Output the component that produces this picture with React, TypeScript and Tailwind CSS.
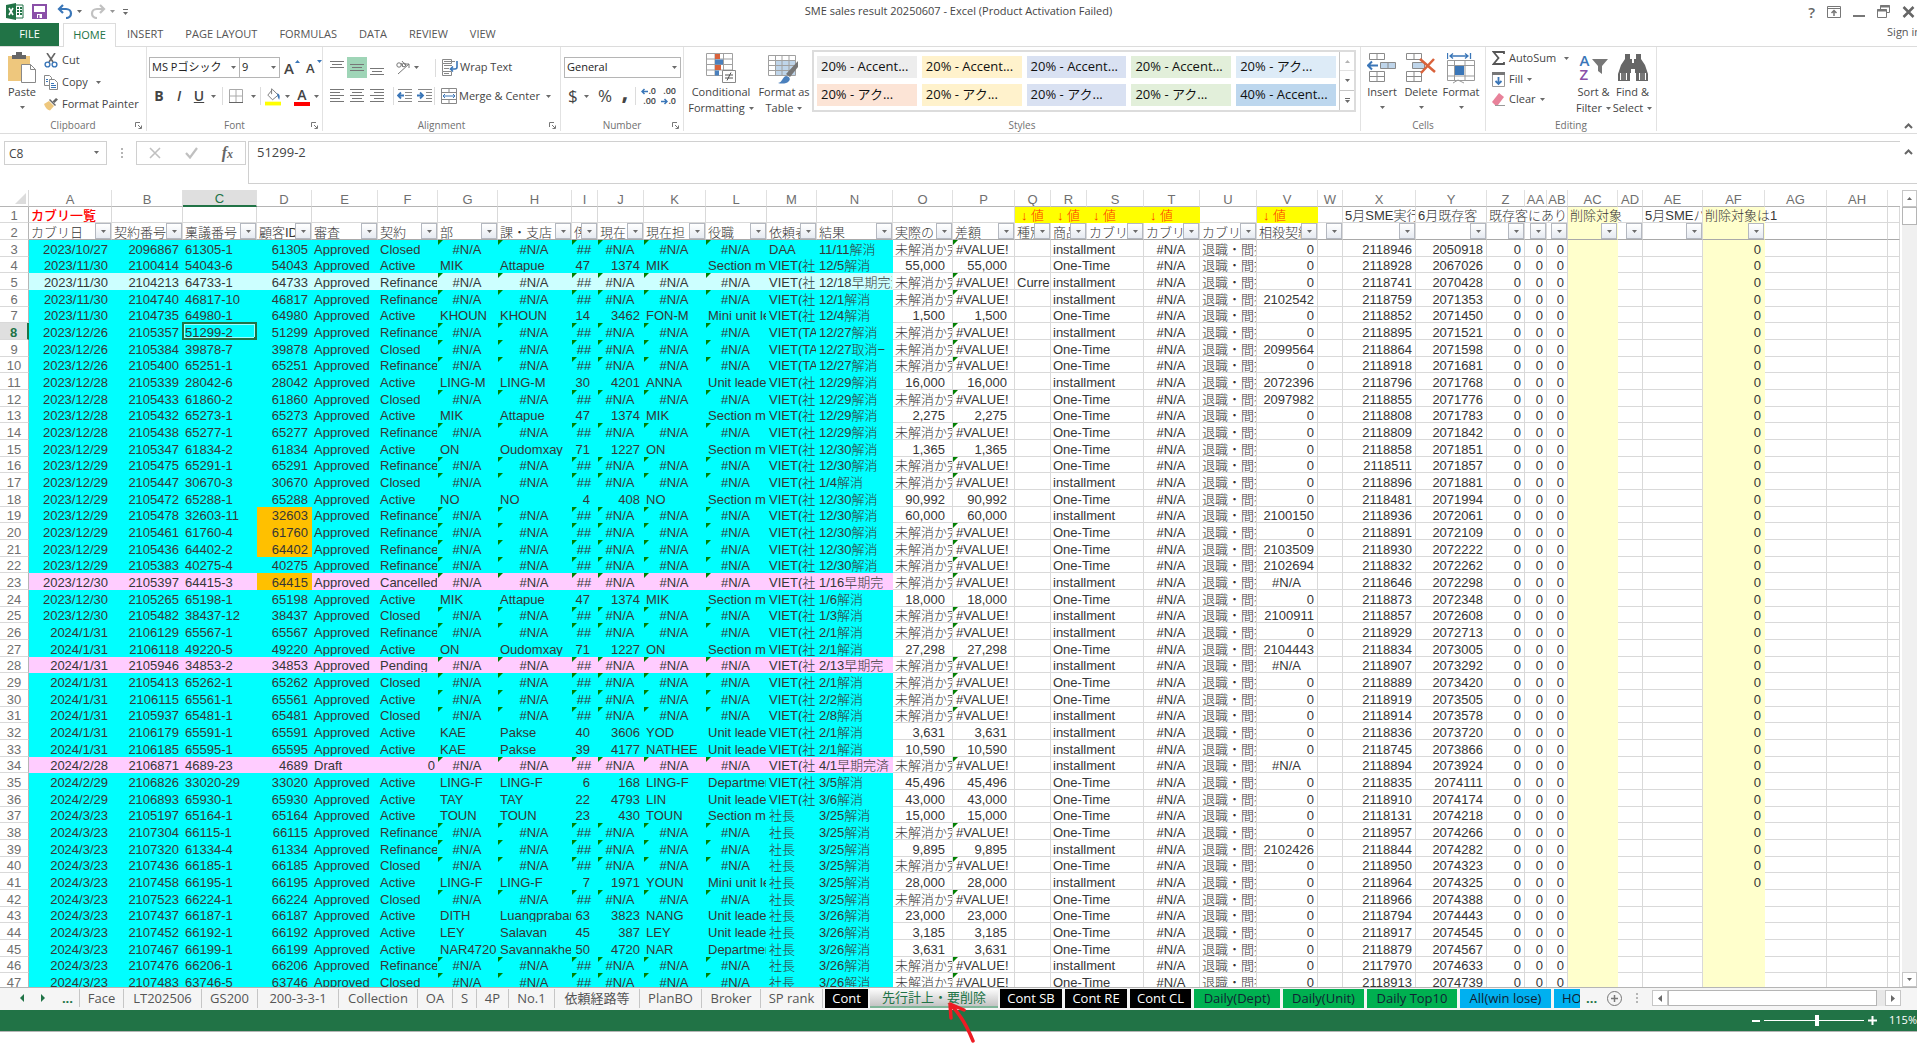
import type { ReactNode } from "react";

const NA = "#N/A";

// A..AH, the last column of the table takes whatever is left
const columns = [
    { id: "A", width: "w-[83px]", label: "カブリ日" },
    { id: "B", width: "w-[71px]", label: "契約番号" },
    { id: "C", width: "w-[74px]", label: "稟議番号" },
    { id: "D", width: "w-[55px]", label: "顧客ID" },
    { id: "E", width: "w-[66px]", label: "審査" },
    { id: "F", width: "w-[60px]", label: "契約" },
    { id: "G", width: "w-[60px]", label: "部" },
    { id: "H", width: "w-[74px]", label: "課・支店" },
    { id: "I", width: "w-[26px]", label: "係" },
    { id: "J", width: "w-[46px]", label: "現在" },
    { id: "K", width: "w-[62px]", label: "現在担" },
    { id: "L", width: "w-[61px]", label: "役職" },
    { id: "M", width: "w-[50px]", label: "依頼者" },
    { id: "N", width: "w-[76px]", label: "結果" },
    { id: "O", width: "w-[60px]", label: "実際の" },
    { id: "P", width: "w-[62px]", label: "差額" },
    { id: "Q", width: "w-[36px]", label: "種別" },
    { id: "R", width: "w-[36px]", label: "商品" },
    { id: "S", width: "w-[57px]", label: "カブリ日" },
    { id: "T", width: "w-[56px]", label: "カブリ日" },
    { id: "U", width: "w-[57px]", label: "カブリ日" },
    { id: "V", width: "w-[61px]", label: "相殺契約" },
    { id: "W", width: "w-[25px]", label: "" },
    { id: "X", width: "w-[73px]", label: "" },
    { id: "Y", width: "w-[71px]", label: "" },
    { id: "Z", width: "w-[38px]", label: "" },
    { id: "AA", width: "w-[22px]", label: "" },
    { id: "AB", width: "w-[21px]", label: "" },
    { id: "AC", width: "w-[50px]", label: "" },
    { id: "AD", width: "w-[25px]", label: "" },
    { id: "AE", width: "w-[60px]", label: "" },
    { id: "AF", width: "w-[62px]", label: "" },
    { id: "AG", width: "w-[62px]", label: "" },
    { id: "AH", width: "w-[61px]", label: "" },
];

// date | contract | approval no. | status | team (6 fields, comma separated) | requester | result | amount | type | offset | X | Y
const data = `2023/10/27|2096867|61305-1|Closed||DAA|11/11解消||i|0|2118946|2050918
2023/11/30|2100414|54043-6|Active|MIK,Attapue,47,1374,MIK,Section manager|VIET(社|12/5解消|55,000|o|0|2118928|2067026
2023/11/30|2104213|64733-1|Refinance||VIET(社|12/18早期完済||i|0|2118741|2070428
2023/11/30|2104740|46817-10|Refinance||VIET(社|12/1解消||i|2102542|2118759|2071353
2023/11/30|2104735|64980-1|Active|KHOUN,KHOUN,14,3462,FON-M,Mini unit leader|VIET(社|12/4解消|1,500|o|0|2118852|2071450
2023/12/26|2105357|51299-2|Refinance||VIET(TA|12/27解消||i|0|2118895|2071521
2023/12/26|2105384|39878-7|Closed||VIET(TA|12/27取消−||o|2099564|2118864|2071598
2023/12/26|2105400|65251-1|Refinance||VIET(TA|12/27解消||o|0|2118918|2071681
2023/12/28|2105339|28042-6|Active|LING-M,LING-M,30,4201,ANNA,Unit leade|VIET(社|12/29解消|16,000|i|2072396|2118796|2071768
2023/12/28|2105433|61860-2|Closed||VIET(社|12/29解消||o|2097982|2118855|2071776
2023/12/28|2105432|65273-1|Active|MIK,Attapue,47,1374,MIK,Section manager|VIET(社|12/29解消|2,275|o|0|2118808|2071783
2023/12/28|2105438|65277-1|Refinance||VIET(社|12/29解消||o|0|2118809|2071842
2023/12/29|2105347|61834-2|Active|ON,Oudomxay,71,1227,ON,Section manager|VIET(社|12/30解消|1,365|o|0|2118858|2071851
2023/12/29|2105475|65291-1|Refinance||VIET(社|12/30解消||o|0|2118511|2071857
2023/12/29|2105447|30670-3|Closed||VIET(社|1/4解消||i|0|2118896|2071881
2023/12/29|2105472|65288-1|Active|NO,NO,4,408,NO,Section manager|VIET(社|12/30解消|90,992|o|0|2118481|2071994
2023/12/29|2105478|32603-11|Refinance||VIET(社|12/30解消|60,000|i|2100150|2118936|2072061
2023/12/29|2105461|61760-4|Refinance||VIET(社|12/30解消||o|0|2118891|2072109
2023/12/29|2105436|64402-2|Refinance||VIET(社|12/30解消||o|2103509|2118930|2072222
2023/12/29|2105383|40275-4|Refinance||VIET(社|12/30解消||o|2102694|2118832|2072262
2023/12/30|2105397|64415-3|Cancelled||VIET(社|1/16早期完||i|#N/A|2118646|2072298
2023/12/30|2105265|65198-1|Active|MIK,Attapue,47,1374,MIK,Section manager|VIET(社|1/6解消|18,000|o|0|2118873|2072348
2023/12/30|2105482|38437-12|Closed||VIET(社|1/3解消||i|2100911|2118857|2072608
2024/1/31|2106129|65567-1|Refinance||VIET(社|2/1解消||i|0|2118929|2072713
2024/1/31|2106118|49220-5|Active|ON,Oudomxay,71,1227,ON,Section manager|VIET(社|2/1解消|27,298|o|2104443|2118834|2073005
2024/1/31|2105946|34853-2|Pending||VIET(社|2/13早期完||i|#N/A|2118907|2073292
2024/1/31|2105413|65262-1|Closed||VIET(社|2/1解消||o|0|2118889|2073420
2024/1/31|2106115|65561-1|Active||VIET(社|2/2解消||o|0|2118919|2073505
2024/1/31|2105937|65481-1|Closed||VIET(社|2/8解消||i|0|2118914|2073578
2024/1/31|2106179|65591-1|Active|KAE,Pakse,40,3606,YOD,Unit leade|VIET(社|2/1解消|3,631|i|0|2118836|2073720
2024/1/31|2106185|65595-1|Active|KAE,Pakse,39,4177,NATHEE,Unit leade|VIET(社|2/1解消|10,590|i|0|2118745|2073866
2024/2/28|2106871|4689-23|0||VIET(社|4/1早期完済||i|#N/A|2118894|2073924
2024/2/29|2106826|33020-29|Active|LING-F,LING-F,6,168,LING-F,Department|VIET(社|3/5解消|45,496|o|0|2118835|2074111
2024/2/29|2106893|65930-1|Active|TAY,TAY,22,4793,LIN,Unit leade|VIET(社|3/6解消|43,000|o|0|2118910|2074174
2024/3/23|2105197|65164-1|Active|TOUN,TOUN,23,430,TOUN,Section manager|社長|3/25解消|15,000|o|0|2118131|2074218
2024/3/23|2107304|66115-1|Refinance||社長|3/25解消||o|0|2118957|2074266
2024/3/23|2107320|61334-4|Refinance||社長|3/25解消|9,895|i|2102426|2118844|2074282
2024/3/23|2107436|66185-1|Closed||社長|3/25解消||o|0|2118950|2074323
2024/3/23|2107458|66195-1|Active|LING-F,LING-F,7,1971,YOUN,Mini unit leader|社長|3/25解消|28,000|i|0|2118964|2074325
2024/3/23|2107523|66224-1|Closed||社長|3/25解消||o|0|2118966|2074388
2024/3/23|2107437|66187-1|Active|DITH,Luangprabang,63,3823,NANG,Unit leade|社長|3/26解消|23,000|o|0|2118794|2074443
2024/3/23|2107452|66192-1|Active|LEY,Salavan,45,387,LEY,Unit leade|社長|3/26解消|3,185|o|0|2118917|2074545
2024/3/23|2107467|66199-1|Active|NAR4720,Savannakhet,50,4720,NAR,Department|社長|3/26解消|3,631|o|0|2118879|2074567
2024/3/23|2107476|66206-1|Refinance||社長|3/26解消||i|0|2117970|2074633
2024/3/23|2107483|63746-5|Closed||社長|3/26解消||o|0|2118913|2074739`
    .split("\n")
    .map((line) => line.split("|"));

const rowHeight = (n: number) => (n % 3 === 1 ? "h-4" : "h-[17px]");

function Caret({ className = "" }: { className?: string }) {
    return (
        <svg className={`shrink-0 ${className}`} width="5" height="3" viewBox="0 0 5 3">
            <path d="M0 0h5L2.5 3z" fill="#6a6a6a" />
        </svg>
    );
}

/* ---------- Sheet ---------- */

type CellProps = {
    children?: ReactNode;
    align?: "left" | "right" | "center";
    bg?: string;
    flag?: boolean;
    pad?: string;
    span?: number;
    spill?: boolean;
    selected?: boolean;
};

function Cell({ children, align = "left", bg, flag, pad = "pl-0.5 pr-[3px]", span, spill, selected }: CellProps) {
    const alignment = { left: "text-left", right: "text-right", center: "text-center" }[align];
    return (
        <td
            colSpan={span}
            className={`relative border-r border-b align-bottom ${alignment} ${pad} ${bg ? `${bg} border-transparent` : "border-[#d9d9d9]"} ${spill || selected ? "" : "overflow-hidden"}`}
        >
            {flag && (
                <span className="absolute top-0 left-0 border-t-[5px] border-r-[5px] border-t-[#008000] border-r-transparent" />
            )}
            {children}
            {selected && (
                <span className="absolute -inset-px border-2 border-[#217346] ring-1 ring-inset ring-white/60">
                    <span className="absolute -right-[3px] -bottom-[3px] h-1 w-1 bg-[#217346]" />
                </span>
            )}
        </td>
    );
}

function RowHead({ n }: { n: number }) {
    return (
        <th
            scope="row"
            className={`border-b align-bottom ${n === 8 ? "border-r-2 border-r-[#217346] border-b-[#d9d9d9] bg-[#dfdfdf] font-bold text-[#217346]" : "border-r border-r-[#b5b5b5] border-b-[#d9d9d9] font-normal text-[#6f6f6f]"}`}
        >
            {n}
        </th>
    );
}

function TitleRow() {
    const hot = "bg-[#ffff00]";
    const arrow = <span className="text-[#ff3300]">↓ 値</span>;
    return (
        <tr className="h-4">
            <RowHead n={1} />
            <Cell spill>
                <span className="font-medium text-[#ff0000]">カブリ一覧</span>
            </Cell>
            {columns.slice(1, 16).map((c) => (
                <Cell key={c.id} />
            ))}
            <Cell bg={hot} pad="pl-1.5">{arrow}</Cell>
            <Cell bg={hot} pad="pl-1.5">{arrow}</Cell>
            <Cell bg={hot} pad="pl-1.5">{arrow}</Cell>
            <Cell bg={hot} pad="pl-1.5">{arrow}</Cell>
            <Cell />
            <Cell bg={hot} pad="pl-1.5">{arrow}</Cell>
            <Cell />
            <Cell>5月SME実行</Cell>
            <Cell>6月既存客</Cell>
            <Cell span={3}>既存客にあり</Cell>
            <Cell bg="bg-[#ffffcc]" spill>削除対象</Cell>
            <Cell />
            <Cell>5月SMEパ</Cell>
            <Cell bg="bg-[#ffffcc]" spill>削除対象は1</Cell>
            <Cell />
            <Cell />
            <Cell />
        </tr>
    );
}

function FilterRow() {
    return (
        <tr className="h-[17px]">
            <RowHead n={2} />
            {columns.map((c) => (
                <td
                    key={c.id}
                    className={`relative overflow-hidden border-r border-b border-b-[#a9a9a9] pl-0.5 align-bottom ${c.id === "AC" || c.id === "AF" ? "border-r-[#ffffcc] bg-[#ffffcc]" : "border-r-[#d9d9d9]"}`}
                >
                    {c.label}
                    {c.id !== "AG" && c.id !== "AH" && (
                        <button
                            aria-label={`Filter ${c.id}`}
                            className="absolute top-0 right-0 flex h-4 w-4 items-center justify-center border border-[#b4b8c0] bg-linear-to-b from-white to-[#e6eaf1]"
                        >
                            <Caret />
                        </button>
                    )}
                </td>
            ))}
            <td className="border-r border-b border-r-[#d9d9d9] border-b-[#a9a9a9]" />
        </tr>
    );
}

function DataRow({ row, n }: { row: string[]; n: number }) {
    const [date, contract, approval, status, team, requester, result, amount, type, offset, x, y] = row;
    const people = team ? team.split(",") : null;
    const bg = n === 5 ? "bg-[#ccffff]" : [23, 28, 34].includes(n) ? "bg-[#ffccff]" : "bg-[#00ffff]";
    const idBg = [19, 20, 21, 23].includes(n) ? "bg-[#ffc000]" : bg;
    const aligns = ["left", "left", "right", "right", "left", "left"] as const;

    return (
        <tr className={rowHeight(n)}>
            <RowHead n={n} />
            <Cell bg={bg} align="right">{date}</Cell>
            <Cell bg={bg} align="right">{contract}</Cell>
            <Cell bg={bg} selected={n === 8}>{approval}</Cell>
            <Cell bg={idBg} align="right">{approval.split("-")[0]}</Cell>
            <Cell bg={bg}>{n === 34 ? "Draft" : "Approved"}</Cell>
            <Cell bg={bg} align={status === "0" ? "right" : "left"} pad="pl-0.5 pr-0.5">{status}</Cell>
            {aligns.map((align, i) =>
                people ? (
                    <Cell key={i} bg={bg} align={align} pad={i === 2 ? "pr-[7px]" : undefined}>{people[i]}</Cell>
                ) : (
                    <Cell key={i} bg={bg} align="center" flag>{i === 2 ? "##" : NA}</Cell>
                ),
            )}
            <Cell bg={bg}>{requester}</Cell>
            <Cell bg={bg}>{result}</Cell>
            <Cell align={amount ? "right" : "left"} pad="pl-0.5 pr-[7px]">{amount || "未解消か完"}</Cell>
            <Cell align={amount ? "right" : "left"} pad={amount ? "pr-[7px]" : "pl-[3px]"} flag={!amount}>
                {amount || "#VALUE!"}
            </Cell>
            <Cell>{n === 5 ? "Curre" : ""}</Cell>
            <Cell span={2}>{type === "i" ? "installment" : "One-Time"}</Cell>
            <Cell align="center">{NA}</Cell>
            <Cell>退職・間接</Cell>
            <Cell align={offset === NA ? "center" : "right"}>{offset}</Cell>
            <Cell />
            <Cell align="right">{x}</Cell>
            <Cell align="right">{y}</Cell>
            <Cell align="right">0</Cell>
            <Cell align="right">0</Cell>
            <Cell align="right">0</Cell>
            <Cell bg="bg-[#ffffcc]" />
            <Cell />
            <Cell />
            <Cell bg="bg-[#ffffcc]" align="right">{n <= 41 ? "0" : ""}</Cell>
            <Cell />
            <Cell />
            <Cell />
        </tr>
    );
}

function Sheet() {
    return (
        <main className="flex min-h-0 flex-1 overflow-hidden font-['Liberation_Sans','Noto_Sans_CJK_JP',sans-serif]">
            <div className="min-w-0 flex-1 overflow-hidden">
                <table className="w-full table-fixed border-separate border-spacing-0 text-[13px] leading-[13px] font-light whitespace-nowrap text-[#363636]">
                    <colgroup>
                        <col className="w-[29px]" />
                        {columns.map((c) => (
                            <col key={c.id} className={c.width} />
                        ))}
                        <col />
                    </colgroup>
                    <thead>
                        <tr className="h-[17px]">
                            <th className="relative border-r border-b border-r-[#d9d9d9] border-b-[#b5b5b5]">
                                <span className="absolute right-0.5 bottom-0.5 border-b-[11px] border-l-[11px] border-b-[#dcdcdc] border-l-transparent" />
                            </th>
                            {columns.map((c) => (
                                <th
                                    key={c.id}
                                    className={`overflow-hidden border-r border-r-[#e0e0e0] align-bottom font-normal ${c.id === "C" ? "border-b-2 border-b-[#217346] bg-[#dfdfdf] text-[#217346]" : "border-b border-b-[#b5b5b5] text-[#6f6f6f]"}`}
                                >
                                    {c.id}
                                </th>
                            ))}
                            <th className="border-b border-b-[#b5b5b5]" />
                        </tr>
                    </thead>
                    <tbody>
                        <TitleRow />
                        <FilterRow />
                        {data.map((row, i) => (
                            <DataRow key={row[1]} row={row} n={i + 3} />
                        ))}
                    </tbody>
                </table>
            </div>
            <div className="ml-0.5 flex w-[15px] flex-col bg-[#f0f0f0]">
                <button aria-label="Scroll up" className="flex h-[17px] items-center justify-center border border-[#c6c6c6] bg-white">
                    <Caret className="rotate-180" />
                </button>
                <div className="h-[18px] border border-[#b5b5b5] bg-white" />
                <button aria-label="Scroll down" className="mt-auto flex h-[15px] items-center justify-center border border-[#c6c6c6] bg-white">
                    <Caret />
                </button>
            </div>
        </main>
    );
}

/* ---------- Title bar and ribbon ---------- */

function TitleBar() {
    return (
        <header className="relative flex h-[23px] shrink-0 items-center px-1.5">
            <div className="flex items-center">
                <svg width="18" height="17" viewBox="0 0 18 17">
                    <path d="M8 2h9v13H8z" fill="#fff" stroke="#217346" />
                    <path d="M11 5h2M14 5h2M11 8h2M14 8h2M11 11h2M14 11h2" stroke="#217346" strokeWidth="2" />
                    <path d="M0 2l10-2v17L0 15z" fill="#217346" />
                    <path d="M3 5l4 7M7 5l-4 7" stroke="#fff" strokeWidth="1.6" />
                </svg>
                <button aria-label="Save" className="ml-2">
                    <svg width="15" height="15" viewBox="0 0 15 15" className="block">
                        <path d="M1 1h13v13H1z" fill="#fff" stroke="#8a4fa8" strokeWidth="2" />
                        <path d="M1 8h13v6H1z" fill="#8a4fa8" />
                        <path d="M5 10h5v4H5z" fill="#fff" />
                        <path d="M6 11h1.500v3H6z" fill="#8a4fa8" />
                    </svg>
                </button>
                <button aria-label="Undo" className="ml-2.5 flex items-center gap-1">
                    <svg width="16" height="15" viewBox="0 0 16 15" fill="none" stroke="#3a76b8" strokeWidth="2.200">
                        <path d="M6 1L2 5l4 4M2 5h7c3 0 5 2 5 4.500S12 14 9 14" />
                    </svg>
                    <Caret />
                </button>
                <button aria-label="Redo" className="ml-2 flex items-center gap-1 opacity-70">
                    <svg width="16" height="15" viewBox="0 0 16 15" fill="none" stroke="#a8a8a8" strokeWidth="2.200">
                        <path d="M10 1l4 4-4 4M14 5H7C4 5 2 7 2 9.500S4 14 7 14" />
                    </svg>
                    <Caret />
                </button>
                <button aria-label="Customize toolbar" className="ml-2 flex flex-col items-center gap-0.5">
                    <span className="h-px w-[5px] bg-[#6a6a6a]" />
                    <Caret />
                </button>
            </div>
            <h1 className="absolute inset-x-0 text-center text-[11px] text-[#444]">
                SME sales result 20250607 - Excel (Product Activation Failed)
            </h1>
            <div className="relative ml-auto -mr-1 flex items-center gap-3 text-[#666]">
                <button className="text-[15px] leading-4 font-semibold">?</button>
                <button aria-label="Ribbon display options">
                    <svg width="14" height="12" viewBox="0 0 14 12" fill="none" stroke="#777">
                        <path d="M.5.5h13v11H.5zM.5 2.500h13" />
                        <path d="M7 10V5M4.500 7L7 4.500 9.500 7" strokeWidth="1.500" />
                    </svg>
                </button>
                <button aria-label="Minimize">
                    <svg width="12" height="12"><path d="M0 9h12v2H0z" fill="#777" /></svg>
                </button>
                <button aria-label="Restore">
                    <svg width="13" height="13" viewBox="0 0 13 13" fill="#fff" stroke="#777">
                        <path d="M3.500.5h9v7h-9z" />
                        <path d="M3 1.500h10" strokeWidth="2" />
                        <path d="M.5 4.500h9v8h-9z" />
                        <path d="M0 5.500h10" strokeWidth="2" />
                    </svg>
                </button>
                <button aria-label="Close">
                    <svg width="13" height="12" viewBox="0 0 13 12"><path d="M1.500 1l10 10M11.500 1l-10 10" stroke="#666" strokeWidth="2.500" /></svg>
                </button>
            </div>
        </header>
    );
}

function RibbonTabs() {
    return (
        <nav className="flex h-6 shrink-0 items-stretch border-b border-[#dcdcdc] text-[11px] text-[#555]">
            <button className="w-[59px] bg-[#217346] text-white">FILE</button>
            <button className="-mb-px ml-1 w-[53px] border border-b-0 border-[#dcdcdc] bg-white text-[#217346]">HOME</button>
            {["INSERT", "PAGE LAYOUT", "FORMULAS", "DATA", "REVIEW", "VIEW"].map((t) => (
                <button key={t} className="px-[11px]">{t}</button>
            ))}
            <a href="#signin" className="-mr-1 ml-auto self-center pb-1 whitespace-nowrap">Sign in</a>
        </nav>
    );
}

function Group({ name, width, launcher, children }: { name: string; width: string; launcher?: boolean; children: ReactNode }) {
    return (
        <section className={`relative flex shrink-0 flex-col border-r border-[#e2e2e2] ${width}`}>
            <div className="flex flex-1 items-start">{children}</div>
            <div className="h-3 text-center text-[10px] leading-3 text-[#707070]">{name}</div>
            {launcher && (
                <button aria-label={`${name} settings`} className="absolute right-1 bottom-0.5">
                    <svg width="7" height="7" viewBox="0 0 7 7" fill="none" stroke="#777" className="block">
                        <path d="M.5 5V.5H5M3 3l3 3M6.500 3.500v3h-3" />
                    </svg>
                </button>
            )}
        </section>
    );
}

function Divider() {
    return <span className="h-[18px] w-px shrink-0 bg-[#dcdcdc]" />;
}

function Lines({ rows }: { rows: number[][] }) {
    return (
        <svg width="14" height="16" viewBox="0 0 14 16">
            {rows.map(([x, y, w]) => (
                <path key={y} d={`M${x} ${y}.5h${w}`} stroke="#777" />
            ))}
        </svg>
    );
}

function BigButton({ icon, lines, width, caretBelow }: { icon: ReactNode; lines: string[]; width: string; caretBelow?: boolean }) {
    return (
        <button className={`flex flex-col items-center pt-[5px] ${width}`}>
            <span className="flex h-8 items-center">{icon}</span>
            {lines.map((line, i) => (
                <span key={line} className="flex items-center gap-1 leading-4 whitespace-nowrap">
                    {line}
                    {!caretBelow && i === lines.length - 1 && <Caret />}
                </span>
            ))}
            {caretBelow && <Caret className="mt-1.5" />}
        </button>
    );
}

function Clipboard() {
    return (
        <Group name="Clipboard" width="w-[147px]" launcher>
            <BigButton
                width="w-11"
                lines={["Paste"]}
                caretBelow
                icon={
                    <svg width="30" height="32" viewBox="0 0 30 32">
                        <path d="M1 4h22v25H1z" fill="#eec77d" />
                        <path d="M5 3h4V0h6v3h4v4H5z" fill="#666" />
                        <path d="M14.500 12.500h9l5 5v13h-14z" fill="#fff" stroke="#888" />
                        <path d="M23.500 12.500v5h5" fill="none" stroke="#888" />
                    </svg>
                }
            />
            <div className="flex flex-col pt-0.5 whitespace-nowrap">
                <button className="flex h-[22px] items-center gap-1">
                    <svg width="14" height="15" viewBox="0 0 14 15" fill="none">
                        <path d="M3 0l6 9M11 0L5 9" stroke="#666" strokeWidth="1.600" />
                        <circle cx="3.500" cy="11.500" r="2.400" stroke="#3a76b8" strokeWidth="1.400" />
                        <circle cx="10.500" cy="11.500" r="2.400" stroke="#3a76b8" strokeWidth="1.400" />
                    </svg>
                    Cut
                </button>
                <button className="flex h-[22px] items-center gap-1">
                    <svg width="14" height="15" viewBox="0 0 14 15" fill="#fff" stroke="#888">
                        <path d="M.5.500h5l2 2v8h-7z" />
                        <path d="M5.500 4.500h5l3 3v7h-8z" />
                        <path d="M7 8.500h3M7 10.500h5M7 12.500h5M2 4.500h2M2 6.500h2" stroke="#3a76b8" />
                    </svg>
                    Copy <Caret className="ml-1" />
                </button>
                <button className="flex h-[22px] items-center gap-1">
                    <svg width="14" height="14" viewBox="0 0 14 14">
                        <path d="M0 7l5-3 5 5-4 4.500C3 13 1 10 0 7z" fill="#eec77d" />
                        <path d="M5 3l6 6 1-1-6-6z" fill="#666" />
                        <path d="M8.500 4.500L12 1l2 1.500-3.500 3.500z" fill="#666" />
                    </svg>
                    Format Painter
                </button>
            </div>
        </Group>
    );
}

function Dropdown({ label, value, width }: { label: string; value: string; width: string }) {
    return (
        <label className={`relative block h-[21px] ${width}`}>
            <span className="sr-only">{label}</span>
            <select className="h-full w-full appearance-none border border-[#b5b5b5] bg-white pl-0.5 text-[11px] text-[#222]">
                <option>{value}</option>
            </select>
            <Caret className="absolute top-[9px] right-1" />
        </label>
    );
}

function FontGroup() {
    return (
        <Group name="Font" width="w-[176px]" launcher>
            <div className="flex flex-col gap-2 pt-2.5 pl-0.5">
                <div className="flex items-center">
                    <Dropdown label="Font" value="MS Pゴシック" width="w-[91px]" />
                    <Dropdown label="Font size" value="9" width="-ml-px w-[41px]" />
                    <button aria-label="Grow font" className="relative ml-1 w-4 text-left text-[15px] leading-5 font-semibold">
                        A
                        <svg width="5" height="3" className="absolute top-0.5 right-0"><path d="M0 3h5L2.500 0z" fill="#3a76b8" /></svg>
                    </button>
                    <button aria-label="Shrink font" className="relative ml-1.5 w-4 text-left text-[13px] leading-5 font-semibold">
                        A
                        <svg width="5" height="3" className="absolute top-0.5 right-0"><path d="M0 0h5L2.500 3z" fill="#3a76b8" /></svg>
                    </button>
                </div>
                <div className="flex h-5 items-center text-sm">
                    <button className="w-5 font-bold">B</button>
                    <button className="w-5 font-semibold italic">I</button>
                    <button className="w-5 font-semibold underline">U</button>
                    <Caret className="mx-0.5" />
                    <span className="w-1" />
                    <Divider />
                    <button aria-label="Borders" className="ml-1.5 flex items-center gap-2">
                        <svg width="14" height="15" viewBox="0 0 14 15" fill="none" stroke="#aaa">
                            <path d="M.5.5h13v13H.5zM7 .500v13M.5 7h13" />
                            <path d="M0 13.500h14" stroke="#666" />
                        </svg>
                        <Caret />
                    </button>
                    <span className="w-1" />
                    <Divider />
                    <button aria-label="Fill color" className="ml-1 flex items-center gap-1">
                        <svg width="16" height="19" viewBox="0 0 17 19">
                            <path d="M8 2l6 6-6 5-5-5z" fill="#fff" stroke="#777" />
                            <path d="M7 1v6" stroke="#777" />
                            <path d="M13 6c3 1 3 4 2 7-1-2-2-4-2-7z" fill="#3a76b8" />
                            <path d="M0 15h17v4H0z" fill="#ffff00" />
                        </svg>
                        <Caret />
                    </button>
                    <button aria-label="Font color" className="ml-1 flex items-center gap-1">
                        <span className="w-4 border-b-4 border-[#ff0000] text-center leading-[15px] font-semibold">A</span>
                        <Caret />
                    </button>
                </div>
            </div>
        </Group>
    );
}

function Alignment() {
    return (
        <Group name="Alignment" width="w-[238px]" launcher>
            <div className="flex flex-col gap-2 pt-2.5 pl-1">
                <div className="flex h-[21px] items-center">
                    <button aria-label="Top align" className="flex w-5 justify-center"><Lines rows={[[0, 1, 14], [2, 4, 10], [0, 7, 14]]} /></button>
                    <button aria-label="Middle align" className="flex h-[21px] w-5 items-center justify-center bg-[#9fd5b7]"><Lines rows={[[0, 4, 14], [2, 7, 10], [0, 10, 14]]} /></button>
                    <button aria-label="Bottom align" className="flex w-5 justify-center"><Lines rows={[[0, 8, 14], [2, 11, 10], [0, 14, 14]]} /></button>
                    <button aria-label="Orientation" className="ml-2 flex items-center gap-1">
                        <svg width="15" height="15" viewBox="0 0 15 15" fill="none" stroke="#777">
                            <path d="M3 14L14 4M14 4h-4M14 4v4" />
                            <circle cx="4" cy="5" r="2.200" />
                            <path d="M6 3l2 4M7 1l4 5" />
                            <circle cx="9" cy="5" r="1.800" />
                        </svg>
                        <Caret />
                    </button>
                    <span className="w-4" />
                    <Divider />
                    <button className="ml-1.5 flex items-center gap-0.5 whitespace-nowrap">
                        <svg width="16" height="17" viewBox="0 0 16 17" fill="none" stroke="#888">
                            <path d="M.5.5h9v4h-9zM.5 4.500v8h9M.5 12.500v4h9v-4M2 2.500h11M2 6.500h8M2 9.500h5M2 14.500h5" />
                            <path d="M15 2v6c0 1-1 2-2 2H9M11 7.500L8.500 10l2.500 2.500" stroke="#3a76b8" strokeWidth="1.600" />
                        </svg>
                        Wrap Text
                    </button>
                </div>
                <div className="flex h-5 items-center">
                    <button aria-label="Align left" className="flex w-5 justify-center"><Lines rows={[[0, 1, 14], [0, 4, 10], [0, 7, 14], [0, 10, 10], [0, 13, 14]]} /></button>
                    <button aria-label="Center" className="flex w-5 justify-center"><Lines rows={[[0, 1, 14], [2, 4, 10], [0, 7, 14], [2, 10, 10], [0, 13, 14]]} /></button>
                    <button aria-label="Align right" className="flex w-5 justify-center"><Lines rows={[[0, 1, 14], [4, 4, 10], [0, 7, 14], [4, 10, 10], [0, 13, 14]]} /></button>
                    <span className="w-1.5" />
                    <Divider />
                    <button aria-label="Decrease indent" className="flex w-5 justify-center">
                        <svg width="15" height="16" viewBox="0 0 15 16" fill="none" stroke="#888">
                            <path d="M1 1.500h14M8 4.500h7M8 7.500h7M8 10.500h7M1 13.500h14" />
                            <path d="M7 7.500H1M4 4.500l-3 3 3 3" stroke="#3a76b8" strokeWidth="1.800" />
                        </svg>
                    </button>
                    <button aria-label="Increase indent" className="flex w-5 justify-center">
                        <svg width="15" height="16" viewBox="0 0 15 16" fill="none" stroke="#888">
                            <path d="M1 1.500h14M9 4.500h6M9 7.500h6M9 10.500h6M1 13.500h14" />
                            <path d="M0 7.500h6M3 4.500l3 3-3 3" stroke="#3a76b8" strokeWidth="1.800" />
                        </svg>
                    </button>
                    <Divider />
                    <button className="ml-1.5 flex items-center gap-0.5 whitespace-nowrap">
                        <svg width="16" height="17" viewBox="0 0 16 17" fill="none" stroke="#888">
                            <path d="M.5.5h15v15H.5zM.5 4.500h15M.5 11.500h15M8 .5v4M8 11.500v4" />
                            <path d="M2 8h12M4 6L2 8l2 2M12 6l2 2-2 2" stroke="#3a76b8" />
                        </svg>
                        Merge &amp; Center <Caret className="ml-1" />
                    </button>
                </div>
            </div>
        </Group>
    );
}

function NumberGroup() {
    return (
        <Group name="Number" width="w-[123px]" launcher>
            <div className="flex flex-col gap-2 pt-2.5 pl-[3px]">
                <Dropdown label="Number format" value="General" width="w-[117px]" />
                <div className="flex h-5 items-center pl-1 text-[17px]">
                    <button className="w-4 text-left">$</button>
                    <Caret className="mr-1.5" />
                    <button className="w-5">%</button>
                    <button className="w-5 self-start text-2xl leading-[10px] font-bold">,</button>
                    <Divider />
                    <button aria-label="Increase decimal" className="ml-1 w-4 text-[9px] leading-[10px] font-semibold">
                        <span className="flex items-center justify-end">
                            <svg width="7" height="7" viewBox="0 0 7 7" fill="none" stroke="#3a76b8" strokeWidth="1.500"><path d="M7 3.500H1M3.500 1L1 3.500 3.500 6" /></svg>
                            .0
                        </span>
                        <span className="block text-right">.00</span>
                    </button>
                    <button aria-label="Decrease decimal" className="ml-1 w-4 text-[9px] leading-[10px] font-semibold">
                        <span className="block text-right">.00</span>
                        <span className="flex items-center justify-end">
                            <svg width="7" height="7" viewBox="0 0 7 7" fill="none" stroke="#3a76b8" strokeWidth="1.500"><path d="M0 3.500h6M3.500 1L6 3.500 3.500 6" /></svg>
                            .0
                        </span>
                    </button>
                </div>
            </div>
        </Group>
    );
}

const styles = [
    { name: "20% - Accent...", bg: "bg-[#ededed]" },
    { name: "20% - Accent...", bg: "bg-[#fff2cc]" },
    { name: "20% - Accent...", bg: "bg-[#d9e1f2]" },
    { name: "20% - Accent...", bg: "bg-[#e2efda]" },
    { name: "20% - アク...", bg: "bg-[#ddebf7]" },
    { name: "20% - アク...", bg: "bg-[#fce4d6]" },
    { name: "20% - アク...", bg: "bg-[#fff2cc]" },
    { name: "20% - アク...", bg: "bg-[#d9e1f2]" },
    { name: "20% - アク...", bg: "bg-[#e2efda]" },
    { name: "40% - Accent...", bg: "bg-[#bdd7ee]" },
];

function Styles() {
    return (
        <Group name="Styles" width="w-[677px]">
            <BigButton
                width="w-[74px]"
                lines={["Conditional", "Formatting"]}
                icon={
                    <svg width="31" height="31" viewBox="0 0 31 31" fill="none">
                        <path d="M.5.5h26v22H.5zM.5 6h26M.5 11.500h26M.5 17h26M9 .500v22M17.500 .5v22" stroke="#a0a0a0" />
                        <path d="M9 1h5v5H9zM9 12h6v5H9z" fill="#d9623b" />
                        <path d="M9 6.500h8v5H9zM9 17.500h4v5H9z" fill="#4a80bd" />
                        <path d="M16.500 17.500h13v12h-13z" fill="#fff" stroke="#888" />
                        <path d="M19 22h8M19 25h8M25 19.500l-4 8" stroke="#555" />
                    </svg>
                }
            />
            <BigButton
                width="w-[52px]"
                lines={["Format as", "Table"]}
                icon={
                    <svg width="32" height="31" viewBox="0 0 32 31" fill="none">
                        <path d="M8 7h20v15H8z" fill="#bfd5ea" />
                        <path d="M.5 2.500h27v20H.5zM.5 7.500h27M.5 12.500h27M.5 17.500h27M7.500 2.500v20M14 2.500v20M21 2.500v20" stroke="#a0a0a0" />
                        <path d="M30 8v6l-8 10-4-3z" fill="#777" />
                        <path d="M10 30c5-1 4-6 8-7 3 0 5 3 3 5-2 3-8 3-11 2z" fill="#4a80bd" />
                    </svg>
                }
            />
            <div className="mt-[3px] ml-0.5 flex h-[62px] w-[544px] border-2 border-[#dcdcdc]">
                <div className="grid flex-1 grid-cols-5 gap-[5px] p-[3px] pt-1">
                    {styles.map((s, i) => (
                        <button key={i} className={`h-[22px] pl-1 text-left text-[13px] whitespace-nowrap text-[#111] ${s.bg}`}>
                            {s.name}
                        </button>
                    ))}
                </div>
                <div className="grid w-[15px] grid-rows-3 divide-y divide-[#c6c6c6] border-l border-[#c6c6c6]">
                    <button aria-label="Previous styles" className="flex items-center justify-center opacity-50"><Caret className="rotate-180" /></button>
                    <button aria-label="Next styles" className="flex items-center justify-center"><Caret /></button>
                    <button aria-label="More styles" className="flex flex-col items-center justify-center gap-px">
                        <span className="h-px w-[5px] bg-[#6a6a6a]" />
                        <Caret />
                    </button>
                </div>
            </div>
        </Group>
    );
}

function CellsGroup() {
    return (
        <Group name="Cells" width="w-[125px]">
            <BigButton
                width="w-[42px]"
                lines={["Insert"]}
                caretBelow
                icon={
                    <svg width="30" height="30" viewBox="0 0 30 30" fill="none" stroke="#8a8a8a">
                        <path d="M2.500.5h15v6h-15zM10 .5v6M2.500 18.500h15v10h-15zM10 18.500v10M2.500 23.500h15" />
                        <path d="M13.500 9.500h15v6h-15zM21 9.500v6" fill="#bfd5ea" />
                        <path d="M11 12.500H1M5 8.500l-4 4 4 4" stroke="#3a76b8" strokeWidth="2" />
                    </svg>
                }
            />
            <BigButton
                width="w-9"
                lines={["Delete"]}
                caretBelow
                icon={
                    <svg width="30" height="30" viewBox="0 0 30 30" fill="none" stroke="#8a8a8a">
                        <path d="M.5.5h15v6H.5zM8 .5v6M.5 18.500h15v10H.5zM8 18.500v10M.5 23.500h15" />
                        <path d="M6.500 9.500h12v6h-12z" fill="#bfd5ea" />
                        <path d="M14 6l15 13M28 6L15 20" stroke="#d9623b" strokeWidth="2.500" />
                    </svg>
                }
            />
            <BigButton
                width="w-11"
                lines={["Format"]}
                caretBelow
                icon={
                    <svg width="29" height="31" viewBox="0 0 29 31" fill="none" stroke="#9a9a9a">
                        <path d="M.5 7.500h27v20H.5zM7.500 7.500v20M18 7.500v20M.5 12.500h27M.5 23h27M6 30l5-3 6 3" />
                        <path d="M8 13h9v9H8z" fill="#3a76b8" stroke="none" />
                        <path d="M.5 0v6M23.500 0v6M3 3h18M6 .5L3 3l3 2.500M18 .5L21 3l-3 2.500" stroke="#3a76b8" strokeWidth="1.300" />
                    </svg>
                }
            />
        </Group>
    );
}

function Editing() {
    return (
        <Group name="Editing" width="w-[171px]">
            <div className="flex w-[88px] flex-col pl-1.5 whitespace-nowrap">
                <button className="flex h-[22px] items-center gap-1">
                    <svg width="13" height="14" viewBox="0 0 13 14" fill="none" stroke="#555" strokeWidth="1.800">
                        <path d="M12 3V1H1.500l5 6-5 6H12v-2" />
                    </svg>
                    AutoSum <Caret className="ml-1" />
                </button>
                <button className="flex h-5 items-center gap-1">
                    <svg width="13" height="15" viewBox="0 0 13 15" fill="none">
                        <path d="M.5.5h12v14H.5z" stroke="#999" />
                        <path d="M0 1.500h13" stroke="#777" strokeWidth="3" />
                        <path d="M6.500 5v7M3.500 9l3 3 3-3" stroke="#3a76b8" strokeWidth="1.800" />
                    </svg>
                    Fill <Caret />
                </button>
                <button className="flex h-5 items-center gap-1">
                    <svg width="13" height="13" viewBox="0 0 13 13">
                        <path d="M7 0l5 4-6 8H3L0 9z" fill="#e8829a" />
                        <path d="M3 12.500h10" stroke="#999" />
                    </svg>
                    Clear <Caret />
                </button>
            </div>
            <BigButton
                width="w-[39px]"
                lines={["Sort &", "Filter"]}
                icon={
                    <span className="relative flex h-[30px] w-7 flex-col items-start text-[15px] leading-[14px] font-semibold">
                        <span className="text-[#3a76b8]">A</span>
                        <span className="text-[#8a4fa8]">Z</span>
                        <svg width="16" height="16" viewBox="0 0 16 16" className="absolute top-1.5 right-0">
                            <path d="M0 0h16l-6 7v8l-4-3V7z" fill="#777" />
                        </svg>
                    </span>
                }
            />
            <BigButton
                width="w-[39px]"
                lines={["Find &", "Select"]}
                icon={
                    <svg width="30" height="28" viewBox="0 0 30 28">
                        <path d="M7 0h5v5h2v4h2V5h2V0h5v5l4 6 3 9v7H18v-8h-1v-4h-4v4h-1v8H0v-7l3-9 4-6z" fill="#666" />
                        <path d="M2 19h7v7H2zM21 19h7v7h-7z" fill="#fff" />
                        <path d="M3 19h5v7H3zM22 19h5v7h-5z" fill="#777" />
                    </svg>
                }
            />
        </Group>
    );
}

function Chevron() {
    return (
        <svg width="9" height="6" viewBox="0 0 9 6" fill="none"><path d="M1 5l3.500-3.500L8 5" stroke="#666" strokeWidth="2" /></svg>
    );
}

function Ribbon() {
    return (
        <div className="flex h-[87px] shrink-0 border-b border-[#dcdcdc] pb-0.5 text-[11px] text-[#444]">
            <Clipboard />
            <FontGroup />
            <Alignment />
            <NumberGroup />
            <Styles />
            <CellsGroup />
            <Editing />
            <button aria-label="Collapse ribbon" className="mt-auto mr-1 mb-0.5 ml-auto">
                <Chevron />
            </button>
        </div>
    );
}

function FormulaBar() {
    return (
        <div className="flex h-14 shrink-0 items-start pt-[7px] text-[13px] text-[#444]">
            <label className="relative ml-1 block h-6 w-[103px]">
                <span className="sr-only">Name box</span>
                <input defaultValue="C8" className="h-full w-full border border-[#d0d0d0] pl-1 text-xs" />
                <Caret className="absolute top-2.5 right-2" />
            </label>
            <div className="flex h-6 w-[29px] flex-col items-center justify-center gap-0.5">
                <span className="h-0.5 w-0.5 bg-[#b5b5b5]" />
                <span className="h-0.5 w-0.5 bg-[#b5b5b5]" />
                <span className="h-0.5 w-0.5 bg-[#b5b5b5]" />
            </div>
            <div className="flex h-6 w-[110px] items-center justify-around border border-[#d0d0d0]">
                <button aria-label="Cancel">
                    <svg width="12" height="12" viewBox="0 0 12 12"><path d="M1 1l10 10M11 1L1 11" stroke="#c0c0c0" strokeWidth="1.600" /></svg>
                </button>
                <button aria-label="Enter">
                    <svg width="13" height="12" viewBox="0 0 13 12" fill="none"><path d="M1 6l4 4.500L12 1" stroke="#c0c0c0" strokeWidth="2.200" /></svg>
                </button>
                <button className="font-['Liberation_Serif',serif] text-base leading-5 font-bold text-[#666] italic">
                    f<span className="text-xs">x</span>
                </button>
            </div>
            <textarea
                aria-label="Formula"
                defaultValue="51299-2"
                className="ml-0.5 h-[43px] flex-1 resize-none border border-r-0 border-[#d0d0d0] pl-2 leading-5"
            />
            <button aria-label="Collapse formula bar" className="flex h-[43px] w-[17px] justify-center border-b border-[#d0d0d0] pt-2">
                <Chevron />
            </button>
        </div>
    );
}

/* ---------- Sheet tabs and status bar ---------- */

const plainTabs = [
    { name: "Face", width: "w-11" },
    { name: "LT202506", width: "w-[78px]" },
    { name: "GS200", width: "w-14" },
    { name: "200-3-3-1", width: "w-[81px]" },
    { name: "Collection", width: "w-[79px]" },
    { name: "OA", width: "w-[35px]" },
    { name: "S", width: "w-6" },
    { name: "4P", width: "w-8" },
    { name: "No.1", width: "w-[46px]" },
    { name: "依頼経路等", width: "w-[85px]" },
    { name: "PlanBO", width: "w-[62px]" },
    { name: "Broker", width: "w-[59px]" },
    { name: "SP rank", width: "w-[62px]" },
];

const colorTabs = [
    { name: "Cont SB", style: "w-[62px] bg-black text-white" },
    { name: "Cont RE", style: "w-[62px] bg-black text-white" },
    { name: "Cont CL", style: "w-[61px] bg-black text-white" },
    { name: "Daily(Dept)", style: "w-[86px] bg-[#00b050] text-[#123]" },
    { name: "Daily(Unit)", style: "w-[81px] bg-[#00b050] text-[#123]" },
    { name: "Daily Top10", style: "w-[90px] bg-[#00b050] text-[#123]" },
    { name: "All(win lose)", style: "w-[91px] bg-[#00b0f0] text-[#123]" },
    { name: "HO", style: "w-[26px] bg-[#00b0f0] pl-2 text-left text-[#123]" },
];

function SheetTabs() {
    return (
        <footer className="flex h-[23px] shrink-0 items-center border-t border-[#b5b5b5] bg-[#f5f5f5] pb-0.5 text-[13px] leading-[18px] whitespace-nowrap text-[#555]">
            <div className="flex w-20 items-center justify-between border-r border-[#c6c6c6] pr-1.5 pl-5">
                <button aria-label="Previous sheet"><svg width="4" height="8"><path d="M4 0v8L0 4z" fill="#217346" /></svg></button>
                <button aria-label="Next sheet"><svg width="4" height="8"><path d="M0 0v8l4-4z" fill="#217346" /></svg></button>
                <button className="font-bold text-[#217346]">...</button>
            </div>
            {plainTabs.map((t) => (
                <button key={t.name} className={`h-[19px] border-r border-[#c6c6c6] ${t.width}`}>{t.name}</button>
            ))}
            <button className="ml-0.5 h-[19px] w-[43px] bg-black text-white">Cont</button>
            <button className="mx-0.5 h-5 w-[128px] border-b-2 border-[#7fb598] bg-linear-to-b from-white to-[#c4c4c4] text-[#217346]">
                先行計上・要削除
            </button>
            <div className="flex gap-[3px]">
                {colorTabs.map((t) => (
                    <button key={t.name} className={`h-[19px] overflow-hidden ${t.style}`}>{t.name}</button>
                ))}
            </div>
            <button className="ml-1.5 font-bold text-[#217346]">...</button>
            <button aria-label="New sheet" className="ml-2.5">
                <svg width="15" height="15" viewBox="0 0 15 15" fill="none" stroke="#777">
                    <circle cx="7.500" cy="7.500" r="7" />
                    <path d="M7.500 4v7M4 7.500h7" strokeWidth="1.500" />
                </svg>
            </button>
            <div className="mx-3.5 flex flex-col gap-0.5">
                <span className="h-0.5 w-0.5 bg-[#b5b5b5]" />
                <span className="h-0.5 w-0.5 bg-[#b5b5b5]" />
                <span className="h-0.5 w-0.5 bg-[#b5b5b5]" />
            </div>
            <div className="mr-4 flex h-4 flex-1 bg-[#e8e8e8]">
                <button aria-label="Scroll left" className="flex w-4 items-center justify-center border border-[#c6c6c6] bg-white">
                    <svg width="4" height="7"><path d="M4 0v7L0 3.500z" fill="#6a6a6a" /></svg>
                </button>
                <div className="mr-2 flex-1 border border-[#b5b5b5] bg-white" />
                <button aria-label="Scroll right" className="flex w-4 items-center justify-center border border-[#c6c6c6] bg-white">
                    <svg width="4" height="7"><path d="M0 0v7l4-3.500z" fill="#6a6a6a" /></svg>
                </button>
            </div>
        </footer>
    );
}

function StatusBar() {
    return (
        <div className="mb-[11px] flex h-[22px] shrink-0 items-center justify-end border-b border-[#b5b5b5] bg-[#217346] text-[11px] text-white">
            <button aria-label="Zoom out" className="h-0.5 w-2 bg-white" />
            <input
                type="range"
                aria-label="Zoom"
                defaultValue={53}
                className="mx-1 h-3 w-[100px] appearance-none bg-[linear-gradient(#fff,#fff)] bg-[length:100%_1px] bg-center bg-no-repeat [&::-webkit-slider-thumb]:h-[11px] [&::-webkit-slider-thumb]:w-1 [&::-webkit-slider-thumb]:appearance-none [&::-webkit-slider-thumb]:bg-white"
            />
            <button aria-label="Zoom in">
                <svg width="9" height="9"><path d="M4.500 0v9M0 4.500h9" stroke="#fff" strokeWidth="2" /></svg>
            </button>
            <span className="ml-3">115%</span>
        </div>
    );
}

export default function App() {
    return (
        <div className="relative flex h-screen flex-col overflow-hidden bg-white font-['Open_Sans','Noto_Sans_CJK_JP',sans-serif]">
            <TitleBar />
            <RibbonTabs />
            <Ribbon />
            <FormulaBar />
            <Sheet />
            <SheetTabs />
            <StatusBar />
            {/* hand-drawn pointer to the active sheet tab */}
            <svg className="pointer-events-none absolute bottom-0 left-[944px]" width="34" height="44" viewBox="0 0 34 44" fill="none" stroke="#ed1c24" strokeWidth="3.500" strokeLinecap="round" strokeLinejoin="round">
                <path d="M7 19L6 5l14 6M7 6c9 9 16 21 22 36" />
            </svg>
        </div>
    );
}
